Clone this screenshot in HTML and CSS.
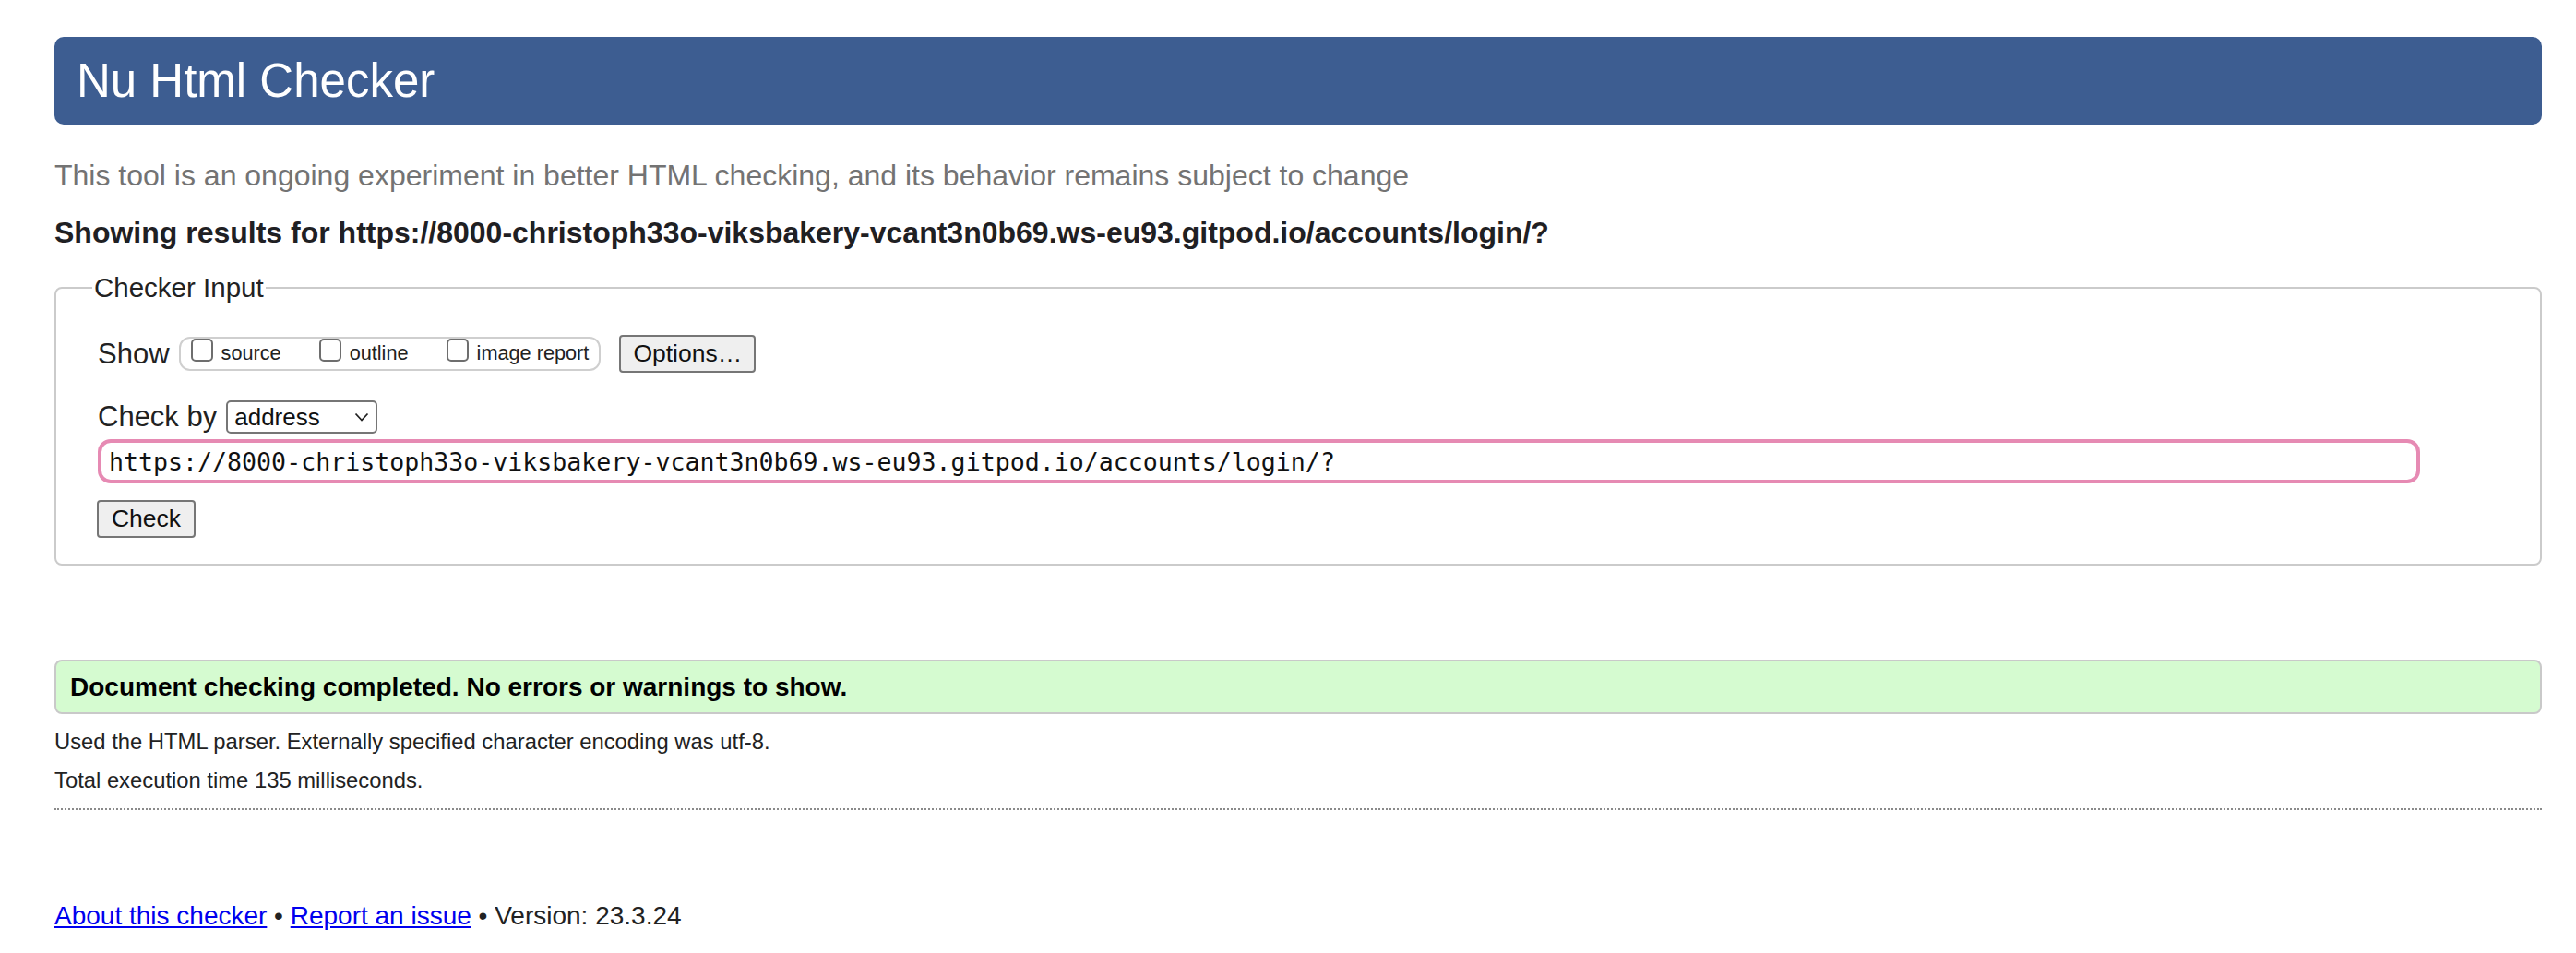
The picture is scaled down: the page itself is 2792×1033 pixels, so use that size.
FILE: index.html
```html
<!DOCTYPE html>
<html lang="en">
<head>
<meta charset="utf-8">
<title>Showing results for https://8000-christoph33o-viksbakery-vcant3n0b69.ws-eu93.gitpod.io/accounts/login/? - Nu Html Checker</title>
<link rel="stylesheet" href="styles.css">
</head>
<body>
<h1 class="title">Nu Html Checker</h1>
<p class="intro">This tool is an ongoing experiment in better HTML checking, and its behavior remains subject to change</p>
<p class="showing">Showing results for https://8000-christoph33o-viksbakery-vcant3n0b69.ws-eu93.gitpod.io/accounts/login/?</p>

<form class="checker-form">
  <fieldset class="checker">
    <legend class="checker-legend">Checker Input</legend>
    <div class="row row-show">
      <span class="row-label">Show</span>
      <span class="show-group">
        <label class="opt"><input type="checkbox" class="cb"><span class="opt-text">source</span></label>
        <label class="opt"><input type="checkbox" class="cb"><span class="opt-text">outline</span></label>
        <label class="opt"><input type="checkbox" class="cb"><span class="opt-text">image report</span></label>
      </span>
      <button type="button" class="btn btn-options">Options…</button>
    </div>
    <div class="row row-checkby">
      <span class="row-label">Check by</span>
      <span class="select-wrap">
        <select class="select">
          <option>address</option>
        </select>
        <svg class="chevron" width="16" height="10" viewBox="0 0 16 10"><path d="M1.5 1.5 L8 8.5 L14.5 1.5" fill="none" stroke="#222" stroke-width="1.8"/></svg>
      </span>
    </div>
    <div class="row row-input">
      <input class="url" type="text" value="https://8000-christoph33o-viksbakery-vcant3n0b69.ws-eu93.gitpod.io/accounts/login/?">
    </div>
    <div class="row row-submit">
      <button type="button" class="btn btn-check">Check</button>
    </div>
  </fieldset>
</form>

<div class="success">Document checking completed. No errors or warnings to show.</div>
<p class="details">Used the HTML parser. Externally specified character encoding was utf-8.</p>
<p class="details">Total execution time 135 milliseconds.</p>
<hr class="sep">

<p class="footer"><a href="#">About this checker</a> • <a href="#">Report an issue</a> • Version: 23.3.24</p>
</body>
</html>
```

FILE: styles.css
```css
html, body {
  background: #ffffff;
}

body {
  margin: 0;
  padding: 40px 37px 0 59px;
  font-family: "Liberation Sans", Arial, Helvetica, sans-serif;
  color: #222222;
}

.title {
  margin: 0;
  height: 95px;
  padding: 0 24px;
  display: flex;
  align-items: center;
  background: #3d5d91;
  color: #ffffff;
  font-size: 51px;
  font-weight: normal;
  border-radius: 10px;
}

.intro {
  margin: 37px 0 0 0;
  font-size: 32px;
  color: #737373;
  line-height: 36px;
}

.showing {
  margin: 26px 0 0 0;
  font-size: 32px;
  font-weight: bold;
  color: #1f2023;
  line-height: 36px;
}

.checker-form {
  margin: 25px 0 0 0;
}

.checker {
  margin: 0;
  padding: 0 0 28px 45px;
  border: 2px solid #cbcbcb;
  border-radius: 8px;
  min-width: 0;
}

.checker-legend {
  margin-left: -6px;
  padding: 0 2px;
  font-size: 29.5px;
  line-height: 34px;
  color: #222222;
}

.row {
  display: flex;
  align-items: center;
}

.row-label {
  font-size: 31px;
  line-height: 36px;
  color: #222222;
}

.row-show {
  margin-top: 34px;
  height: 41px;
}

.show-group {
  display: inline-flex;
  align-items: flex-end;
  height: 33px;
  margin-left: 10px;
  padding: 0 11px 0 11px;
  border: 2px solid #cfcfcf;
  border-radius: 12px;
}

.opt {
  display: inline-flex;
  align-items: flex-end;
  margin-right: 41px;
  padding-bottom: 6px;
}

.opt:last-child {
  margin-right: 0;
}

.cb {
  appearance: none;
  -webkit-appearance: none;
  width: 24px;
  height: 25px;
  margin: 0 9px 0 0;
  border: 2px solid #6e6e6e;
  border-radius: 5px;
  background: #ffffff;
  align-self: flex-start;
  position: relative;
  top: -2px;
}

.opt-text {
  font-size: 21.7px;
  line-height: 22px;
  color: #222222;
}

.btn {
  font-family: "Liberation Sans", Arial, Helvetica, sans-serif;
  font-size: 26.5px;
  color: #111111;
  background: #efefef;
  border: 2px solid #767676;
  border-radius: 4px;
  height: 41px;
  padding: 0 12px;
  line-height: 35px;
}

.btn-options {
  margin-left: 20px;
  width: 148px;
}

.row-checkby {
  margin-top: 30px;
  height: 36px;
}

.select-wrap {
  position: relative;
  display: inline-block;
  margin-left: 10px;
}

.select {
  appearance: none;
  -webkit-appearance: none;
  display: block;
  width: 164px;
  height: 36px;
  padding: 0 0 0 7px;
  border: 2px solid #767676;
  border-radius: 5px;
  background: #ffffff;
  font-family: "Liberation Sans", Arial, Helvetica, sans-serif;
  font-size: 26px;
  color: #111111;
}

.chevron {
  position: absolute;
  right: 9px;
  top: 13px;
  pointer-events: none;
}

.row-input {
  margin-top: 6px;
}

.url {
  box-sizing: border-box;
  width: calc(100% - 130px);
  height: 48px;
  padding: 0 0 0 8px;
  border: 4px solid #e68ab3;
  border-radius: 14px;
  outline: none;
  font-family: "DejaVu Sans Mono", "Liberation Mono", monospace;
  font-size: 26.6px;
  color: #111111;
  background: #ffffff;
}

.row-submit {
  margin-top: 18px;
}

.btn-check {
  width: 107px;
  margin-left: -1px;
}

.success {
  margin-top: 102px;
  box-sizing: border-box;
  height: 59px;
  display: flex;
  align-items: center;
  padding: 0 15px;
  background: #d5fbd0;
  border: 2px solid #c9c9c9;
  border-radius: 8px;
  font-weight: bold;
  font-size: 28px;
  color: #000000;
}

.details {
  margin: 14px 0 0 0;
  font-size: 23.8px;
  line-height: 28px;
  color: #222222;
}

.success + .details {
  margin-top: 16px;
}

.sep {
  margin: 16px 0 0 0;
  border: 0;
  border-top: 2px dotted #8a8a8a;
  height: 0;
}

.footer {
  margin: 99px 0 0 0;
  font-size: 28px;
  line-height: 32px;
  color: #222222;
}

.footer a {
  color: #0000ee;
}
```
